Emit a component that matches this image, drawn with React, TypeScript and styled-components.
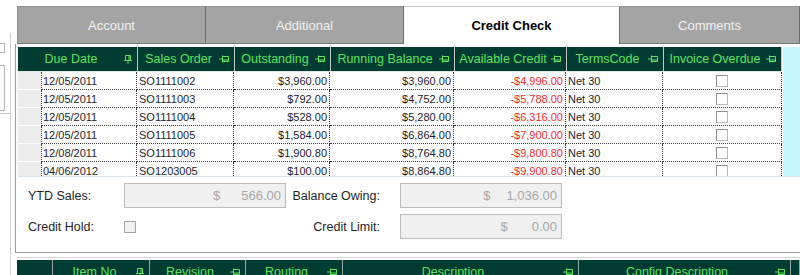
import React from "react";
import styled, { createGlobalStyle } from "styled-components";

const GlobalStyle = createGlobalStyle`
  html, body { margin: 0; padding: 0; background: #fff; }
  body { font-family: "Liberation Sans", Arial, sans-serif; }
  * { box-sizing: border-box; }
`;

const HEADER_BG = "#003c32";
const HEADER_FG = "#60e260";

const Screen = styled.div`
  display: flex;
  width: 800px;
  height: 275px;
  overflow: hidden;
  background: #fff;
`;

/* cut-off panel on the far left */
const LeftStub = styled.div`
  width: 15px;
  flex-shrink: 0;
  padding-top: 33px;
`;

const SideColumn = styled.div`
  width: 11px;
  height: 100%;
  border-right: 1px solid #cfcfcf;
  padding-top: 10px;
  display: flex;
  flex-direction: column;
`;

const SideBox = styled.div<{ $h: number; $mt: number }>`
  width: 5px;
  height: ${(p) => p.$h}px;
  margin-top: ${(p) => p.$mt}px;
  border: 1px solid #b4b4b4;
  border-left: none;
  background: #fafafa;
  flex-shrink: 0;
`;

const SideRule = styled.div`
  margin-top: 2px;
  height: 1px;
  background: #c8c8c8;
  flex-shrink: 0;
`;

const Main = styled.div`
  flex: 1;
  display: flex;
  flex-direction: column;
  padding-top: 6px;
  min-width: 0;
  & > * {
    flex-shrink: 0;
  }
`;

const TabStrip = styled.div`
  display: flex;
  height: 38px;
  margin-left: 2px;
`;

const Tab = styled.div<{ $w?: number; $active?: boolean }>`
  ${(p) => (p.$w ? `width: ${p.$w}px;` : "flex: 1;")}
  display: flex;
  align-items: center;
  justify-content: center;
  font-size: 13px;
  background: ${(p) => (p.$active ? "#fff" : "#a4a4a4")};
  color: ${(p) => (p.$active ? "#000" : "#f2f2f2")};
  font-weight: ${(p) => (p.$active ? 700 : 400)};
  border-top: 1px solid ${(p) => (p.$active ? "#c8c8c8" : "#8e8e8e")};
  border-right: 1px solid #6c6c6c;
  border-bottom: ${(p) => (p.$active ? "none" : "1px solid #7a7a7a")};
  &:first-child {
    border-left: 1px solid #8e8e8e;
  }
`;

const Panel = styled.div`
  height: 209px;
  border-left: 1px solid #9c9c9c;
  border-bottom: 1px solid #9c9c9c;
  padding: 3px 0 0 2px;
  display: flex;
  flex-direction: column;
  & > * {
    flex-shrink: 0;
  }
`;

const GridFrame = styled.div`
  display: flex;
  height: 130px;
  border-bottom: 1px solid #dbe3ea;
  overflow: hidden;
`;

const GridBody = styled.div`
  width: 764px;
  flex-shrink: 0;
`;

const Filler = styled.div`
  flex: 1;
  background: #c4f8fe;
  margin-left: 1px;
`;

const HeaderRow = styled.div<{ $cols: string }>`
  display: grid;
  grid-template-columns: ${(p) => p.$cols};
  height: 25px;
  border-bottom: 1px solid #e6e6e6;
`;

const HeaderCell = styled.div`
  background: ${HEADER_BG};
  color: ${HEADER_FG};
  font-size: 12.5px;
  display: flex;
  align-items: center;
  padding-right: 5px;
  border-right: 1px solid #c6c6c6;
  white-space: nowrap;
  overflow: hidden;
`;

const HeaderText = styled.span`
  flex: 1;
  text-align: center;
`;

const DataRow = styled.div`
  display: grid;
  grid-template-columns: 23px 96px 97px 96px 124px 112px 97px 119px;
  height: 18px;
`;

const Selector = styled.div`
  background: #ececec;
  border-bottom: 1px solid #fff;
`;

const Cell = styled.div<{ $align?: "left" | "right" | "center"; $red?: boolean; $first?: boolean }>`
  font-size: 11px;
  color: ${(p) => (p.$red ? "#ff2b2b" : "#1c1c2c")};
  display: flex;
  align-items: center;
  justify-content: ${(p) =>
    p.$align === "right" ? "flex-end" : p.$align === "center" ? "center" : "flex-start"};
  padding: 0 2px 0 2px;
  border-right: 1px dotted #3c3c3c;
  border-bottom: 1px dotted #3c3c3c;
  ${(p) => (p.$first ? "border-left: 1px dotted #3c3c3c; padding-left: 1px;" : "")}
  white-space: nowrap;
  background: #fff;
`;

const CheckBox = styled.div<{ $size: number }>`
  width: ${(p) => p.$size}px;
  height: ${(p) => p.$size}px;
  border: 1px solid #8c8c8c;
  border-right-color: #b8b8b8;
  border-bottom-color: #b8b8b8;
  background: #fff;
`;

const DisabledCheck = styled(CheckBox)`
  background: #f0f0f0;
  border-color: #a4a4a4;
`;

const Form = styled.div`
  display: grid;
  grid-template-columns: 96px 162px 114px 162px;
  grid-auto-rows: 25px;
  row-gap: 6px;
  padding: 6px 0 0 10px;
  align-items: center;
`;

const Label = styled.div<{ $right?: boolean }>`
  font-size: 12.5px;
  color: #1e1e1e;
  ${(p) => (p.$right ? "text-align: right; padding-right: 20px;" : "")}
`;

const MoneyBox = styled.div`
  height: 25px;
  background: #f0f0f0;
  border: 1px solid #bcbcbc;
  display: flex;
  align-items: center;
  justify-content: flex-end;
  padding-right: 4px;
  font-size: 13px;
  color: #a6a6a6;
`;

const Amount = styled.span<{ $gap: number }>`
  margin-left: ${(p) => p.$gap}px;
`;

const BottomArea = styled.div`
  margin-top: 4px;
  margin-left: 2px;
  border-top: 1px solid #d6d6d6;
  padding-top: 2px;
`;

const BottomHeader = styled.div`
  display: grid;
  grid-template-columns: 36px 97px 96px 97px 236px 212px 1fr;
  height: 24px;
`;

const BottomHeaderCell = styled(HeaderCell)`
  border-right: 1px solid #9aa6a2;
`;

const Pin: React.FC<{ pinned?: boolean }> = ({ pinned }) =>
  pinned ? (
    <svg width="8" height="9" viewBox="0 0 8 9" style={{ flexShrink: 0 }}>
      <path d="M1.5 0.5H6.5V5.5 M1.5 0.5V5.5 M0 5.5H8 M4 5.5V9" stroke={HEADER_FG} fill="none" />
      <path d="M5 1V5" stroke={HEADER_FG} />
    </svg>
  ) : (
    <svg width="10" height="8" viewBox="0 0 10 8" style={{ flexShrink: 0 }}>
      <path d="M0 4H3 M3.5 0.5V7.5 M3.5 1.5H9.5V6.5H3.5" stroke={HEADER_FG} fill="none" />
      <path d="M4 5H9" stroke={HEADER_FG} />
    </svg>
  );

const topHeaders: [string, boolean][] = [
  ["Due Date", true],
  ["Sales Order", false],
  ["Outstanding", false],
  ["Running Balance", false],
  ["Available Credit", false],
  ["TermsCode", false],
  ["Invoice Overdue", false],
];

const rows = [
  ["12/05/2011", "SO1111002", "$3,960.00", "$3,960.00", "-$4,996.00", "Net 30"],
  ["12/05/2011", "SO1111003", "$792.00", "$4,752.00", "-$5,788.00", "Net 30"],
  ["12/05/2011", "SO1111004", "$528.00", "$5,280.00", "-$6,316.00", "Net 30"],
  ["12/05/2011", "SO1111005", "$1,584.00", "$6,864.00", "-$7,900.00", "Net 30"],
  ["12/08/2011", "SO1111006", "$1,900.80", "$8,764.80", "-$9,800.80", "Net 30"],
  ["04/06/2012", "SO1203005", "$100.00", "$8,864.80", "-$9,900.80", "Net 30"],
];

const bottomHeaders: [string, boolean][] = [
  ["Item No", true],
  ["Revision", false],
  ["Routing", false],
  ["Description", false],
  ["Config Description", false],
];

export default function App() {
  return (
    <>
      <GlobalStyle />
      <Screen>
        <LeftStub>
          <SideColumn>
            <SideBox $h={10} $mt={0} />
            <SideBox $h={46} $mt={12} />
            <SideRule />
          </SideColumn>
        </LeftStub>
        <Main>
          <TabStrip>
            <Tab $w={189}>Account</Tab>
            <Tab $w={198}>Additional</Tab>
            <Tab $w={216} $active>
              Credit Check
            </Tab>
            <Tab>Comments</Tab>
          </TabStrip>
          <Panel>
            <GridFrame>
              <GridBody>
                <HeaderRow $cols="120px 97px 96px 124px 112px 97px 118px">
                  {topHeaders.map(([label, pinned]) => (
                    <HeaderCell key={label}>
                      <HeaderText>{label}</HeaderText>
                      <Pin pinned={pinned} />
                    </HeaderCell>
                  ))}
                </HeaderRow>
                {rows.map((r, i) => (
                  <DataRow key={i}>
                    <Selector />
                    <Cell $first>{r[0]}</Cell>
                    <Cell>{r[1]}</Cell>
                    <Cell $align="right">{r[2]}</Cell>
                    <Cell $align="right">{r[3]}</Cell>
                    <Cell $align="right" $red>
                      {r[4]}
                    </Cell>
                    <Cell>{r[5]}</Cell>
                    <Cell $align="center">
                      <CheckBox $size={12} />
                    </Cell>
                  </DataRow>
                ))}
              </GridBody>
              <Filler />
            </GridFrame>
            <Form>
              <Label>YTD Sales:</Label>
              <MoneyBox>
                $<Amount $gap={21}>566.00</Amount>
              </MoneyBox>
              <Label $right>Balance Owing:</Label>
              <MoneyBox>
                $<Amount $gap={16}>1,036.00</Amount>
              </MoneyBox>
              <Label>Credit Hold:</Label>
              <div>
                <DisabledCheck $size={12} />
              </div>
              <Label $right>Credit Limit:</Label>
              <MoneyBox>
                $<Amount $gap={24}>0.00</Amount>
              </MoneyBox>
            </Form>
          </Panel>
          <BottomArea>
            <BottomHeader>
              <BottomHeaderCell />
              {bottomHeaders.map(([label, pinned]) => (
                <BottomHeaderCell key={label}>
                  <HeaderText>{label}</HeaderText>
                  <Pin pinned={pinned} />
                </BottomHeaderCell>
              ))}
              <BottomHeaderCell />
            </BottomHeader>
          </BottomArea>
        </Main>
      </Screen>
    </>
  );
}
